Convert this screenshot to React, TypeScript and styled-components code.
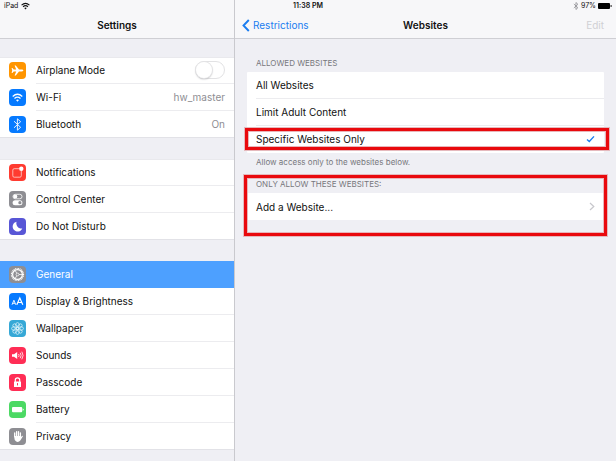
import React from "react";
import styled, { createGlobalStyle, css } from "styled-components";

const GlobalStyle = createGlobalStyle`
  * { box-sizing: border-box; }
  body {
    margin: 0;
    background: #efeff4;
    color: #111;
    font-family: Inter, "Liberation Sans", sans-serif;
    font-size: 10px;
    line-height: 14px;
  }
  button, input {
    font: inherit;
    color: inherit;
    margin: 0;
  }
`;

const Screen = styled.div`
  display: grid;
  grid-template-columns: 235px minmax(0, 1fr);
  grid-template-rows: 12px 1fr;
  min-height: 100vh;
`;

const StatusBar = styled.div`
  grid-area: 1 / 1 / 2 / 3;
  z-index: 1;
  display: grid;
  grid-template-columns: 1fr auto 1fr;
  align-items: center;
  padding: 0 4px;
  font-size: 7px;
  line-height: 12px;
`;

const StatusGroup = styled.div<{ $end?: boolean }>`
  display: flex;
  align-items: center;
  gap: ${(p) => (p.$end ? "2px" : "3px")};
  justify-content: ${(p) => (p.$end ? "flex-end" : "flex-start")};
`;

const Clock = styled.time`
  font-weight: 600;
`;

const Sidebar = styled.aside`
  grid-area: 1 / 1 / 3 / 2;
  border-right: 1px solid #c9c9ce;
`;

const Detail = styled.main`
  grid-area: 1 / 2 / 3 / 3;
`;

const NavBar = styled.header`
  display: grid;
  grid-template-columns: 1fr auto 1fr;
  align-items: center;
  height: 39px;
  padding: 12px 7px 0;
  background: #f7f7f9;
  border-bottom: 1px solid #cfcfd4;
`;

const Title = styled.h1`
  grid-column: 2;
  margin: 0;
  font-size: 10px;
  font-weight: 600;
  line-height: 14px;
`;

const BarButton = styled.button<{ $end?: boolean }>`
  display: flex;
  align-items: center;
  gap: 3px;
  justify-self: ${(p) => (p.$end ? "end" : "start")};
  padding: ${(p) => (p.$end ? "0 5px 0 0" : "0")};
  border: 0;
  background: none;
  color: #1a7df0;
  &:disabled { color: #d0d0d4; }
`;

const SideNav = styled.nav`
  display: flex;
  flex-direction: column;
  gap: 21px;
  padding: 18px 0 11px;
`;

const SideGroup = styled.ul`
  list-style: none;
  margin: 0;
  padding: 0;
  background: #fff;
  box-shadow: inset 0 1px #e9e9ed, inset 0 -1px #e2e2e7;
`;

const rowLayout = css`
  display: flex;
  align-items: center;
  width: 100%;
  height: 27px;
  border: 0;
  background: none;
  text-align: left;
`;

const SideItem = styled.li<{ $selected?: boolean }>`
  ${rowLayout}
  padding-left: 9px;
  gap: 10px;
  ${(p) =>
    p.$selected &&
    css`
      background: #4da0ff;
      color: #fff;
      & > :last-child { border-bottom-color: transparent; }
    `}
  &:last-child > :last-child { border-bottom-color: transparent; }
`;

const sideAction = css`
  ${rowLayout}
  flex: 1;
  justify-content: space-between;
  padding: 0 9px 0 0;
  border-bottom: 1px solid #ececef;
`;

const SideLabel = styled.label`
  ${sideAction}
`;

const SideButton = styled.button`
  ${sideAction}
`;

const Value = styled.span`
  color: #8e8e93;
`;

const Tile = styled.svg<{ $color: string }>`
  flex: none;
  width: 17px;
  height: 17px;
  border-radius: 4px;
  background: ${(p) => p.$color};
`;

const Switch = styled.input`
  appearance: none;
  width: 30px;
  height: 18px;
  border: 1px solid #e2e2e4;
  border-radius: 9px;
  background: #fff;
  &::before {
    content: "";
    display: block;
    width: 16px;
    height: 16px;
    border-radius: 50%;
    background: #fff;
    box-shadow: 0 0 0 1px #e4e4e6, 0 1px 2px #a0a0a4;
  }
  &:checked { background: #4cd964; }
  &:checked::before { margin-left: 12px; }
`;

const Content = styled.div`
  padding: 18px 12px;
`;

const Caption = styled.h2`
  margin: 0;
  padding: 0 9px;
  color: #77777c;
  font-size: 8px;
  font-weight: 400;
  line-height: 12px;
`;

const Note = styled.p`
  margin: 0;
  padding: 3px 9px 7px;
  color: #77777c;
  font-size: 8px;
  line-height: 12px;
`;

const Card = styled.div`
  margin-top: 3px;
  border-radius: 1px;
  background: #fff;
`;

const Option = styled.label`
  position: relative;
  ${rowLayout}
  padding-left: 9px;
`;

const OptionBody = styled.span`
  display: flex;
  flex: 1;
  align-items: center;
  justify-content: space-between;
  height: 27px;
  padding-right: 9px;
  border-bottom: 1px solid #ececef;
  ${Option}:last-child > & { border-bottom-color: transparent; }
`;

const Radio = styled.input`
  appearance: none;
  width: 0;
  height: 0;
  & ~ span > svg { visibility: hidden; }
  &:checked ~ span > svg { visibility: visible; }
`;

const AddButton = styled.button`
  ${rowLayout}
  justify-content: space-between;
  padding: 0 9px;
`;

const WebsiteSection = styled.section`
  position: relative;
  padding: 3px 0 16px;
`;

const Highlight = styled.span<{ $inset: string }>`
  position: absolute;
  inset: ${(p) => p.$inset};
  border: 3px solid #e9090d;
  box-shadow: 0 0 0 1px #e5b9bd, inset 0 0 0 1px #e8b5b9;
  pointer-events: none;
`;

const BT = "M5 5.2 L11.6 11.3 L8.4 14.2 V2.8 L11.6 5.7 L5 11.8";

function WifiShape() {
  return (
    <g fill="none" stroke="currentColor" strokeWidth="1.3">
      <path d="M3.7 7.4 Q8.5 3.1 13.3 7.4" />
      <path d="M5.5 9.4 Q8.5 6.8 11.5 9.4" />
      <path d="M7 11 Q8.5 9.8 10 11 L8.5 12.7Z" fill="currentColor" stroke="none" />
    </g>
  );
}

const icons: Record<string, { color: string; art: React.ReactNode }> = {
  airplane: {
    color: "#ff9500",
    art: (
      <path
        fill="#fff"
        d="M14.3 8.5c0-.6-.8-.9-1.7-.9H10L6.8 3.5H5.6l1.6 4.1H4.7L3.4 6h-.8l.6 2.5-.6 2.5h.8l1.3-1.6h2.5l-1.6 4.1h1.2L10 9.4h2.6c.9 0 1.7-.3 1.7-.9z"
      />
    ),
  },
  wifi: { color: "#067aff", art: <WifiShape /> },
  bluetooth: {
    color: "#067aff",
    art: <path d={BT} fill="none" stroke="#fff" strokeWidth="0.9" />,
  },
  notifications: {
    color: "#ff3b30",
    art: (
      <>
        <path
          d="M10 4.7H5.2a1.4 1.4 0 0 0-1.4 1.4v5.7a1.4 1.4 0 0 0 1.4 1.4h5.7a1.4 1.4 0 0 0 1.4-1.4V7"
          fill="none"
          stroke="#ffd5d2"
          strokeWidth="0.8"
        />
        <circle cx="12.3" cy="4.8" r="2.2" fill="#fff" />
      </>
    ),
  },
  control: {
    color: "#8e8e93",
    art: (
      <>
        <rect x="4" y="3.3" width="9" height="4.5" rx="2.25" fill="none" stroke="#fff" strokeWidth="0.8" />
        <circle cx="6.3" cy="5.5" r="2" fill="#fff" />
        <rect x="3.6" y="9.2" width="9.8" height="5" rx="2.5" fill="#fff" />
        <circle cx="10.9" cy="11.7" r="1.6" fill="#8e8e93" />
      </>
    ),
  },
  moon: {
    color: "#5856d6",
    art: <path fill="#fff" d="M7.6 3.7A5 5 0 1 0 13.3 10.5 5.2 5.2 0 0 1 7.6 3.7Z" />,
  },
  general: {
    color: "#8e8e93",
    art: (
      <g fill="none" stroke="#fff">
        <circle cx="8.5" cy="8.5" r="6" strokeWidth="1.2" strokeDasharray="0.9 0.67" />
        <circle cx="8.5" cy="8.5" r="4.9" strokeWidth="1.2" />
        <circle cx="8.5" cy="8.5" r="1.4" strokeWidth="0.7" />
        <path d="M10 8.5h3.4M7.8 7.3 6 4.3M7.8 9.7 6 12.7" strokeWidth="0.8" />
      </g>
    ),
  },
  display: {
    color: "#067aff",
    art: (
      <g fill="none" stroke="#fff">
        <path d="M3 11.8 4.9 7.2 6.8 11.8M3.7 10.3H6.1" strokeWidth="0.9" />
        <path d="M7.8 11.8 10.8 4.9 13.8 11.8M8.9 9.5H12.7" strokeWidth="1.2" />
      </g>
    ),
  },
  wallpaper: {
    color: "#36a8d6",
    art: (
      <g fill="none" stroke="#e4f6fc" strokeWidth="0.7">
        {[0, 45, 90, 135, 180, 225, 270, 315].map((a) => (
          <ellipse key={a} cx="8.5" cy="5" rx="1.8" ry="2.4" transform={`rotate(${a} 8.5 8.5)`} />
        ))}
        <circle cx="8.5" cy="8.5" r="1.3" />
      </g>
    ),
  },
  sounds: {
    color: "#ff2d55",
    art: (
      <>
        <path d="M3 7.2h2L8.2 5v7L5 9.8H3Z" fill="#fff" />
        <path
          d="M9.6 7q1 1.5 0 3M11.2 5.8q1.9 2.7 0 5.4M12.8 4.7q2.6 3.8 0 7.6"
          fill="none"
          stroke="#fff"
          strokeWidth="0.8"
        />
      </>
    ),
  },
  passcode: {
    color: "#ff2d55",
    art: (
      <>
        <path d="M6.3 8V6a2.2 2.2 0 0 1 4.4 0V8" fill="none" stroke="#fff" strokeWidth="1.2" />
        <rect x="5" y="7.5" width="7" height="5.6" rx="0.6" fill="#fff" />
        <path d="M8.5 9.1v2.3" stroke="#ff2d55" strokeWidth="1" />
      </>
    ),
  },
  battery: {
    color: "#4cd964",
    art: (
      <>
        <rect x="3" y="5.9" width="10.2" height="5.4" rx="1" fill="#fff" />
        <path d="M13.7 7.4q1.1.2 1.1 1.2t-1.1 1.2Z" fill="#fff" />
      </>
    ),
  },
  privacy: {
    color: "#8e8e93",
    art: (
      <g stroke="#fff" strokeLinecap="round" fill="none">
        <path d="M5.7 8.5V4.9M7.6 8V3.6M9.5 8V3.6M11.4 8.5V5" strokeWidth="1.3" />
        <path
          d="M5.2 8h6.7v.9l1.3-1.1q.9-.1.6.6L11.3 12.6Q9.4 14.6 7.2 13.5 5.2 12.5 5.2 9Z"
          fill="#fff"
          stroke="none"
        />
      </g>
    ),
  },
};

function TileIcon({ name }: { name: string }) {
  const icon = icons[name];
  return (
    <Tile viewBox="0 0 17 17" color="#fff" $color={icon.color} aria-hidden="true">
      {icon.art}
    </Tile>
  );
}

type Entry = { icon: string; label: string; value?: string; selected?: boolean; toggle?: boolean };

const groups: Entry[][] = [
  [
    { icon: "airplane", label: "Airplane Mode", toggle: true },
    { icon: "wifi", label: "Wi-Fi", value: "hw_master" },
    { icon: "bluetooth", label: "Bluetooth", value: "On" },
  ],
  [
    { icon: "notifications", label: "Notifications" },
    { icon: "control", label: "Control Center" },
    { icon: "moon", label: "Do Not Disturb" },
  ],
  [
    { icon: "general", label: "General", selected: true },
    { icon: "display", label: "Display & Brightness" },
    { icon: "wallpaper", label: "Wallpaper" },
    { icon: "sounds", label: "Sounds" },
    { icon: "passcode", label: "Passcode" },
    { icon: "battery", label: "Battery" },
    { icon: "privacy", label: "Privacy" },
  ],
];

const options = ["All Websites", "Limit Adult Content", "Specific Websites Only"];

export default function App() {
  return (
    <>
      <GlobalStyle />
      <Screen>
        <StatusBar>
          <StatusGroup>
            <span>iPad</span>
            <svg width="9" height="8" viewBox="3 4 11 9" aria-label="Wi-Fi">
              <WifiShape />
            </svg>
          </StatusGroup>
          <Clock>11:38 PM</Clock>
          <StatusGroup $end>
            <svg width="6" height="8" viewBox="4 2 9 13" aria-label="Bluetooth">
              <path d={BT} fill="none" stroke="#8e8e93" strokeWidth="1.3" />
            </svg>
            <span>97%</span>
            <svg width="14" height="6" viewBox="0 0 14 6" aria-label="Battery level">
              <rect x="0" y="0" width="12" height="6" rx="1" />
              <path d="M12.6 2q1.2 0 1.2 1t-1.2 1Z" />
            </svg>
          </StatusGroup>
        </StatusBar>

        <Sidebar>
          <NavBar>
            <Title>Settings</Title>
          </NavBar>
          <SideNav aria-label="Settings">
            {groups.map((group) => (
              <SideGroup key={group[0].label}>
                {group.map((item) => (
                  <SideItem key={item.label} $selected={item.selected}>
                    <TileIcon name={item.icon} />
                    {item.toggle ? (
                      <SideLabel>
                        {item.label}
                        <Switch type="checkbox" role="switch" />
                      </SideLabel>
                    ) : (
                      <SideButton type="button" aria-current={item.selected ? "page" : undefined}>
                        {item.label}
                        {item.value && <Value>{item.value}</Value>}
                      </SideButton>
                    )}
                  </SideItem>
                ))}
              </SideGroup>
            ))}
          </SideNav>
        </Sidebar>

        <Detail>
          <NavBar>
            <BarButton type="button">
              <svg width="8" height="13" viewBox="0 0 8 13" aria-hidden="true">
                <path d="M6.8 1 1.5 6.5 6.8 12" fill="none" stroke="currentColor" strokeWidth="1.9" />
              </svg>
              Restrictions
            </BarButton>
            <Title>Websites</Title>
            <BarButton type="button" $end disabled>
              Edit
            </BarButton>
          </NavBar>
          <Content>
            <Caption id="allowed">ALLOWED WEBSITES</Caption>
            <Card role="radiogroup" aria-labelledby="allowed">
              {options.map((label, i) => (
                <Option key={label}>
                  <Radio type="radio" name="allowed" defaultChecked={i === 2} />
                  <OptionBody>
                    {label}
                    <svg width="9" height="8" viewBox="0 0 9 8" aria-hidden="true">
                      <path d="M1 4.4 3.3 6.5 8 1.4" fill="none" stroke="#1a7df0" strokeWidth="1.4" />
                    </svg>
                  </OptionBody>
                  {i === 2 && <Highlight $inset="2px -5px 3px -2px" />}
                </Option>
              ))}
            </Card>
            <Note>Allow access only to the websites below.</Note>
            <WebsiteSection>
              <Caption>ONLY ALLOW THESE WEBSITES:</Caption>
              <Card>
                <AddButton type="button">
                  Add a Website...
                  <svg width="6" height="9" viewBox="0 0 6 9" aria-hidden="true">
                    <path d="M1 1 4.8 4.5 1 8" fill="none" stroke="#c7c7cc" strokeWidth="1.2" />
                  </svg>
                </AddButton>
              </Card>
              <Highlight $inset="0 -3px" />
            </WebsiteSection>
          </Content>
        </Detail>
      </Screen>
    </>
  );
}
